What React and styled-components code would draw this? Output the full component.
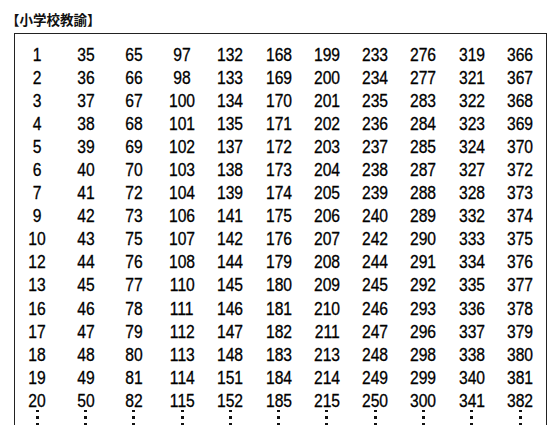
import * as React from 'react';
import styled, { createGlobalStyle } from 'styled-components';

const GlobalStyle = createGlobalStyle`
  html, body {
    margin: 0;
    padding: 0;
    background: #ffffff;
  }
`;

const Page = styled.div`
  width: 557px;
  height: 447px;
  padding: 9px 0 0 0;
  box-sizing: border-box;
  overflow: hidden;
  font-family: 'Liberation Sans', Arial, sans-serif;
  color: #000;
`;

const Title = styled.h2`
  margin: 0 0 4px 6px;
  font-family: 'Noto Sans CJK JP', sans-serif;
  font-weight: 700;
  font-size: 13.5px;
  line-height: 20px;
  color: #111;
`;

const Frame = styled.div`
  margin-left: 14px;
  width: 533px;
  box-sizing: border-box;
  border: 1px solid #222;
  border-bottom: none;
  padding-top: 9.5px;
`;

const Grid = styled.div`
  display: grid;
  grid-template-columns: repeat(11, 1fr);
`;

const Cell = styled.div`
  height: 23.1px;
  line-height: 23.1px;
  padding-right: 3.6px;
  text-align: center;
  font-size: 18px;
`;

const Num = styled.span`
  display: inline-block;
  transform: scaleX(0.87);
  -webkit-text-stroke: 0.3px #000;
`;

const DotCell = styled.div`
  height: 12px;
  padding-right: 3.6px;
  display: flex;
  justify-content: center;
  overflow: visible;
`;

const Dots = styled.div`
  margin-top: -3px;
  display: flex;
  flex-direction: column;
  gap: 4px;
`;

const Dot = styled.span`
  display: block;
  width: 3px;
  height: 3.5px;
  background: #111;
`;

const rows = [
  [1, 35, 65, 97, 132, 168, 199, 233, 276, 319, 366],
  [2, 36, 66, 98, 133, 169, 200, 234, 277, 321, 367],
  [3, 37, 67, 100, 134, 170, 201, 235, 283, 322, 368],
  [4, 38, 68, 101, 135, 171, 202, 236, 284, 323, 369],
  [5, 39, 69, 102, 137, 172, 203, 237, 285, 324, 370],
  [6, 40, 70, 103, 138, 173, 204, 238, 287, 327, 372],
  [7, 41, 72, 104, 139, 174, 205, 239, 288, 328, 373],
  [9, 42, 73, 106, 141, 175, 206, 240, 289, 332, 374],
  [10, 43, 75, 107, 142, 176, 207, 242, 290, 333, 375],
  [12, 44, 76, 108, 144, 179, 208, 244, 291, 334, 376],
  [13, 45, 77, 110, 145, 180, 209, 245, 292, 335, 377],
  [16, 46, 78, 111, 146, 181, 210, 246, 293, 336, 378],
  [17, 47, 79, 112, 147, 182, 211, 247, 296, 337, 379],
  [18, 48, 80, 113, 148, 183, 213, 248, 298, 338, 380],
  [19, 49, 81, 114, 151, 184, 214, 249, 299, 340, 381],
  [20, 50, 82, 115, 152, 185, 215, 250, 300, 341, 382],
];

const App = () => (
  <Page>
    <GlobalStyle />
    <Title>【小学校教諭】</Title>
    <Frame>
      <Grid>
        {rows.map((row, r) =>
          row.map((n, c) => (
            <Cell key={`${r}-${c}`}>
              <Num>{n}</Num>
            </Cell>
          ))
        )}
        {rows[0].map((_, c) => (
          <DotCell key={`dots-${c}`}>
            <Dots>
              <Dot />
              <Dot />
              <Dot />
            </Dots>
          </DotCell>
        ))}
      </Grid>
    </Frame>
  </Page>
);

export default App;
